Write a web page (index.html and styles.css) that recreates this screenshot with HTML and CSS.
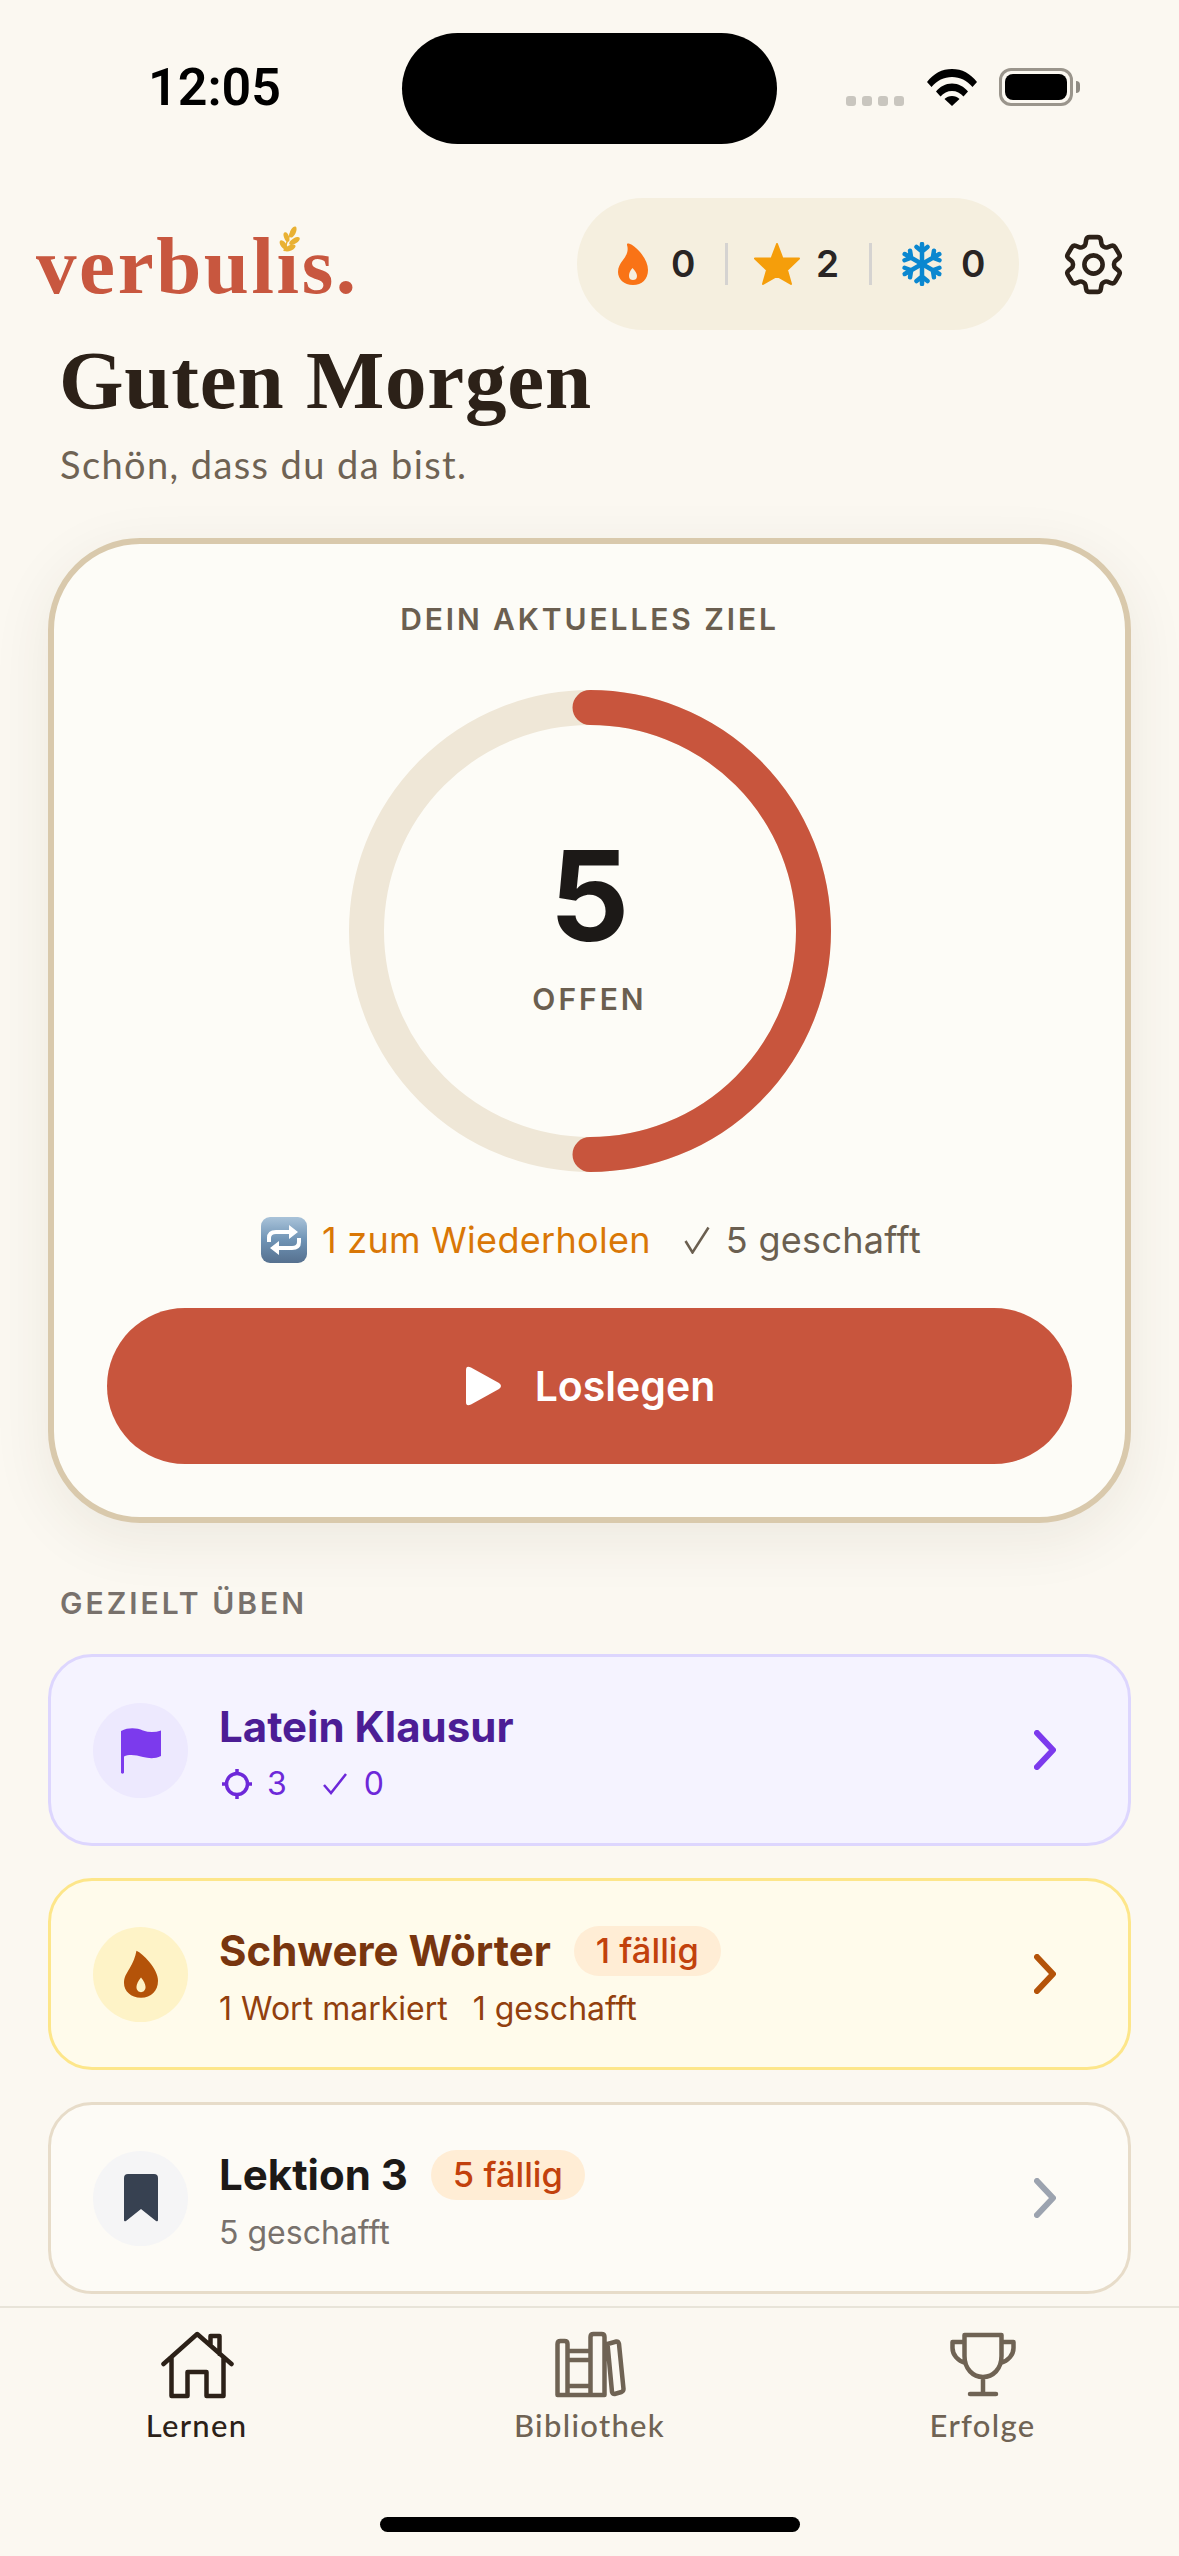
FILE: index.html
```html
<!DOCTYPE html>
<html lang="de">
<head>
<meta charset="utf-8">
<title>Verbulis</title>
<link rel="stylesheet" href="styles.css">
</head>
<body>
<div class="app">
  <div class="status">
    <div class="time">12:05</div>
    <div class="island"></div>
    <div class="sys">
      <div class="dots"><i></i><i></i><i></i><i></i></div>
      <svg class="wifi" width="50" height="37" viewBox="0 0 50 37"><path d="M0 13C6.500 4.500 15 0 25 0S43.500 4.500 50 13L45.500 18C40 11.500 33 8 25 8S10 11.500 4.500 18Z"/><path d="M9 22.500C13 17.500 18.500 14.500 25 14.500S37 17.500 41 22.500L36.500 27.500C33.500 24 29.500 22 25 22S16.500 24 13.500 27.500Z"/><path d="M17.500 30C19.500 28 22 27 25 27S30.500 28 32.500 30L25 37Z"/></svg>
      <div class="battery"><div class="battery-fill"></div></div>
      <div class="battery-cap"></div>
    </div>
  </div>

  <header class="head">
    <div class="logo">verbulis.<svg class="wheat" width="26" height="32" viewBox="0 0 26 32"><circle class="wheat-mask" cx="13" cy="17" r="11"/><path class="wheat-stem" d="M8 27C10 20 13 12 16 6"/><ellipse class="wheat-leaf" cx="17" cy="8" rx="2.800" ry="6" transform="rotate(25 17 8)"/><ellipse class="wheat-leaf" cx="10.500" cy="13" rx="2.500" ry="5" transform="rotate(-20 10.500 13)"/><ellipse class="wheat-leaf" cx="18.500" cy="17" rx="2.800" ry="6" transform="rotate(58 18.500 17)"/><ellipse class="wheat-leaf" cx="7.500" cy="21" rx="2.800" ry="5.500" transform="rotate(-35 7.500 21)"/><ellipse class="wheat-leaf" cx="14" cy="24" rx="2.800" ry="6" transform="rotate(65 14 24)"/></svg></div>
    <div class="head-right">
      <div class="pill">
        <svg class="p-flame" width="30" height="42" viewBox="0 0 30 42"><path fill-rule="evenodd" d="M10 .5C12 .5 17 3 22 9C27 15 30 21 30 27C30 36 24 42 15 42C6 42 0 36 0 29C0 24 2 21 5 17C8 13 11 8 9 2C9 1 9 .5 10 .5ZM14.500 25C12 28 11 30 11 33C11 36 13 37 15 37C17 37 19 36 19 33C19 30 17 28 14.500 25Z"/></svg>
        <span class="p-num n1">0</span>
        <span class="p-div d1"></span>
        <svg class="p-star" width="46" height="42" viewBox="0 0 46 42"><path d="M23 1L28.500 15.500H45L33 27L37 41L23 33L9 41L13 27L1 15.500H17.500Z"/></svg>
        <span class="p-num n2">2</span>
        <span class="p-div d2"></span>
        <svg class="p-snow" width="42" height="44" viewBox="-21 -22 42 44"><defs><g id="arm"><path d="M0 0V-20M-5.500 -17L0 -12.500L5.500 -17"/></g></defs><use href="#arm"/><use href="#arm" transform="rotate(60)"/><use href="#arm" transform="rotate(120)"/><use href="#arm" transform="rotate(180)"/><use href="#arm" transform="rotate(240)"/><use href="#arm" transform="rotate(300)"/></svg>
        <span class="p-num n3">0</span>
      </div>
      <svg class="gear" width="73" height="73" viewBox="0 0 24 24"><path d="M9.594 3.94c.09-.542.56-.94 1.11-.94h2.593c.55 0 1.02.398 1.11.94l.213 1.281c.063.374.313.686.645.87.074.04.147.083.22.127.325.196.72.257 1.075.124l1.217-.456a1.125 1.125 0 0 1 1.37.49l1.296 2.247a1.125 1.125 0 0 1-.26 1.431l-1.003.827c-.293.241-.438.613-.43.992a7.723 7.723 0 0 1 0 .255c-.008.378.137.75.43.991l1.004.827c.424.35.534.955.26 1.43l-1.298 2.247a1.125 1.125 0 0 1-1.369.491l-1.217-.456c-.355-.133-.75-.072-1.076.124a6.47 6.47 0 0 1-.22.128c-.331.183-.581.495-.644.869l-.213 1.281c-.09.543-.56.94-1.11.94h-2.594c-.55 0-1.019-.398-1.11-.94l-.213-1.281c-.062-.374-.312-.686-.644-.87a6.52 6.52 0 0 1-.22-.127c-.325-.196-.72-.257-1.076-.124l-1.217.456a1.125 1.125 0 0 1-1.369-.49l-1.297-2.247a1.125 1.125 0 0 1 .26-1.431l1.004-.827c.292-.24.437-.613.43-.991a6.932 6.932 0 0 1 0-.255c.007-.38-.138-.751-.43-.992l-1.004-.827a1.125 1.125 0 0 1-.26-1.43l1.297-2.247a1.125 1.125 0 0 1 1.37-.491l1.216.456c.356.133.751.072 1.076-.124.072-.044.146-.086.22-.128.332-.183.582-.495.644-.869l.214-1.28Z"/><circle cx="12" cy="12" r="3"/></svg>
    </div>
  </header>

  <main class="main">
    <h1 class="greet">Guten Morgen</h1>
    <p class="sub">Schön, dass du da bist.</p>

    <section class="card">
      <div class="card-label">DEIN AKTUELLES ZIEL</div>
      <div class="ring">
        <svg class="ring-svg" width="482" height="482" viewBox="0 0 482 482"><circle class="ring-track" cx="241" cy="241" r="223.500"/><path class="ring-prog" d="M241 17.500A223.500 223.500 0 0 1 241 464.500"/></svg>
        <div class="ring-center">
          <div class="ring-num">5</div>
          <div class="ring-cap">OFFEN</div>
        </div>
      </div>
      <div class="stats">
        <svg class="repeat" width="46" height="46" viewBox="0 0 46 46"><defs><linearGradient id="rep" x1="0" y1="0" x2="0" y2="1"><stop offset="0" stop-color="#a9c3d9"/><stop offset=".5" stop-color="#6f93b5"/><stop offset="1" stop-color="#56718f"/></linearGradient></defs><rect width="46" height="46" rx="9" fill="url(#rep)"/><path class="rep-line" d="M8 25V21Q8 15 15 15H29M38 21V25Q38 31 31 31H17"/><path class="rep-head" d="M28 8L37 15L28 22ZM18 24L9 31L18 38Z"/></svg>
        <span class="stat-due">1 zum Wiederholen</span>
        <span class="stat-done"><svg class="stat-check" width="26" height="28" viewBox="0 0 26 28"><path d="M1.500 15L8.500 26.500L24.500 1.500"/></svg>5 geschafft</span>
      </div>
      <button class="go"><svg class="play" width="36" height="40" viewBox="0 0 36 40"><path d="M0 4Q0 -1 5 1.500L33 17Q37 20 33 23L5 38.500Q0 41 0 36Z"/></svg>Loslegen</button>
    </section>

    <div class="section-label">GEZIELT ÜBEN</div>

    <div class="rows">
      <a class="row row-violet">
        <span class="row-icon"><svg width="40" height="47" viewBox="0 0 40 47"><path d="M0 4C8 0 16 1 22 3.500C28 5.500 34 5.500 40 3.500V29C34 32 28 31.500 22 30C15 28 8 27 3 29.500V45.500C3 47 0 47 0 45.500Z"/></svg></span>
        <span class="row-text">
          <span class="row-title">Latein Klausur</span>
          <span class="row-sub">
            <svg class="m-target" width="30" height="32" viewBox="0 0 30 32"><circle cx="15" cy="16" r="10.500"/><path d="M15 1V6M15 26V31M0 16H5M25 16H30"/></svg><span class="m-a">3</span>
            <svg class="m-check" width="24" height="22" viewBox="0 0 24 22"><path d="M1 12L8 20L23 1"/></svg><span>0</span>
          </span>
        </span>
        <svg class="chev" width="22" height="40" viewBox="0 0 22 40"><path d="M3 3L19 20L3 37"/></svg>
      </a>

      <a class="row row-amber">
        <span class="row-icon"><svg width="34" height="48" viewBox="0 0 30 42"><path fill-rule="evenodd" d="M11 .5C14 2 18 5 22 10C27 16 30 22 30 27C30 36 24 42 15 42C6 42 0 36 0 29C0 24 2 21 5 16C8 11 10 6 11 .5ZM15 24C12.500 27 11 30 11 32.500C11 35.500 13 37 15 37C17 37 19 35.500 19 32.500C19 30 17.500 27 15 24Z"/></svg></span>
        <span class="row-text">
          <span class="row-title">Schwere Wörter<span class="badge">1 fällig</span></span>
          <span class="row-sub"><span class="m-b">1 Wort markiert</span><span>1 geschafft</span></span>
        </span>
        <svg class="chev" width="22" height="40" viewBox="0 0 22 40"><path d="M3 3L19 20L3 37"/></svg>
      </a>

      <a class="row row-plain">
        <span class="row-icon"><svg width="34" height="48" viewBox="0 0 34 48"><path d="M4 0H30Q34 0 34 4V46Q34 48 32 47L17 35L2 47Q0 48 0 46V4Q0 0 4 0Z"/></svg></span>
        <span class="row-text">
          <span class="row-title">Lektion 3<span class="badge">5 fällig</span></span>
          <span class="row-sub">5 geschafft</span>
        </span>
        <svg class="chev" width="22" height="40" viewBox="0 0 22 40"><path d="M3 3L19 20L3 37"/></svg>
      </a>
    </div>
  </main>

  <nav class="nav">
    <div class="tabs">
      <div class="tab active">
        <svg width="74" height="72" viewBox="19.500 8 74 72"><path d="M23 44L56.700 14L91 44M31 37V76H47V52H66V76H83V37M70 25V16H79V34"/></svg>
        <span>Lernen</span>
      </div>
      <div class="tab">
        <svg width="80" height="72" viewBox="9.500 8 80 72"><path d="M20 21H24Q27 21 27 24V75H17V24Q17 21 20 21ZM27 31H50M27 40H50M27 66H50M27 75H50M53 14H61Q64 14 64 17V75H50V17Q50 14 53 14ZM67 24L76 21.500Q78 21.500 78.500 24L83 69Q83 71 81 72L74 74Q72 74 71.500 72L67 24Z"/></svg>
        <span>Bibliothek</span>
      </div>
      <div class="tab">
        <svg width="72" height="72" viewBox="0 0 72 72"><path d="M17.500 7H54.500V28C54.500 41 46 49 36 49C26 49 17.500 41 17.500 28ZM17.500 14H5.500V20C5.500 27 11 33 18.500 35M54.500 14H66.500V20C66.500 27 61 33 53.500 35M36 49V66M23 66H49"/></svg>
        <span>Erfolge</span>
      </div>
    </div>
    <div class="homebar"></div>
  </nav>
</div>
</body>
</html>
```

FILE: styles.css
```css
* { box-sizing: border-box; }
html, body { margin: 0; padding: 0; }
body { background: #fbf8f1; font-family: "Inter", "Liberation Sans", sans-serif; }

.app {
  width: 1179px;
  height: 2556px;
  display: flex;
  flex-direction: column;
  overflow: hidden;
  background: #fbf8f1;
}

/* Status bar */
.status {
  height: 198px;
  flex: none;
  display: flex;
  align-items: flex-start;
  padding-left: 148px;
}
.time {
  width: 132px;
  margin-top: 58px;
  font: 600 52px/60px "Roboto", "Liberation Sans", sans-serif;
  color: #000;
  white-space: nowrap;
}
.island {
  width: 375px;
  height: 111px;
  margin: 33px 0 0 122px;
  background: #000;
  border-radius: 56px;
}
.sys {
  display: flex;
  align-items: flex-start;
  margin: 68px 0 0 69px;
}
.dots {
  display: flex;
  gap: 6px;
  margin-top: 28px;
}
.dots i {
  width: 10px;
  height: 10px;
  border-radius: 3px;
  background: #c9c6bf;
}
.wifi { margin: 1px 0 0 23px; fill: #000; }
.battery {
  width: 74px;
  height: 38px;
  margin-left: 22px;
  padding: 3px;
  border: 3px solid #9a958c;
  border-radius: 12px;
}
.battery-fill {
  width: 100%;
  height: 100%;
  background: #000;
  border-radius: 8px;
}
.battery-cap {
  width: 4px;
  height: 12px;
  margin: 13px 0 0 3px;
  background: #8f8b83;
  border-radius: 0 6px 6px 0;
}

/* Header */
.head {
  height: 132px;
  flex: none;
  display: flex;
  align-items: center;
  justify-content: space-between;
  padding: 0 49px 0 36px;
}
.logo {
  position: relative;
  font: 700 81px/90px "Liberation Serif", serif;
  letter-spacing: 2.6px;
  color: #c8573f;
  margin-top: 4px;
}
.wheat { position: absolute; left: 240px; top: 3px; }
.wheat-mask { fill: #fbf8f1; }
.wheat-leaf { fill: #e9b133; }
.wheat-stem { fill: none; stroke: #e9b133; stroke-width: 1.5; }
.head-right { display: flex; align-items: center; gap: 38px; }
.pill {
  width: 442px;
  height: 132px;
  padding: 0 0 0 41px;
  display: flex;
  align-items: center;
  background: #f5efdf;
  border-radius: 66px;
}
.p-flame { fill: #f97316; }
.p-star { fill: #f59e0b; stroke: #f59e0b; stroke-width: 2; stroke-linejoin: round; margin-left: 26px; }
.p-snow { fill: none; stroke: #0a87d0; stroke-width: 4.5; stroke-linecap: round; stroke-linejoin: round; margin-left: 29px; }
.p-num {
  width: 22px;
  font-size: 37px;
  line-height: 42px;
  font-weight: 600;
  color: #292524;
  text-align: center;
}
.n1 { margin-left: 23px; }
.n2 { margin-left: 16px; }
.n3 { margin-left: 18px; }
.p-div { width: 3px; height: 42px; background: #d5d3d1; }
.d1 { margin-left: 32px; }
.d2 { margin-left: 31px; }
.gear { fill: none; stroke: #2c2118; stroke-width: 1.5; stroke-linejoin: round; }

/* Main */
.main { flex: 1; min-height: 0; overflow: hidden; }
.greet {
  margin: 2px 0 0;
  padding-left: 59px;
  font: 700 83px/96px "Liberation Serif", serif;
  letter-spacing: 0.8px;
  color: #2c2118;
}
.sub {
  margin: 12px 0 0;
  padding-left: 60px;
  font: 400 38px/48px "Lato", sans-serif;
  letter-spacing: 1.4px;
  color: #6f6354;
}
.card {
  margin: 50px 48px 0;
  height: 985px;
  padding: 57px 53px 53px;
  background: #fdfcf7;
  border: 6px solid #d9c9ac;
  border-radius: 92px;
  box-shadow: 0 16px 60px rgba(70, 50, 20, 0.08);
}
.card-label {
  font-size: 30px;
  line-height: 36px;
  font-weight: 600;
  letter-spacing: 2.9px;
  color: #6b5f50;
  text-align: center;
}
.ring {
  width: 482px;
  height: 482px;
  margin: 53px auto 0;
  display: grid;
  place-items: center;
}
.ring-svg, .ring-center { grid-area: 1 / 1; }
.ring-track { fill: none; stroke: #efe7d7; stroke-width: 35; }
.ring-prog { fill: none; stroke: #c8553d; stroke-width: 35; stroke-linecap: round; }
.ring-center { text-align: center; padding-bottom: 14px; }
.ring-num {
  font-size: 125px;
  line-height: 130px;
  font-weight: 700;
  color: #1c1917;
}
.ring-cap {
  margin-top: 20px;
  font-size: 30px;
  line-height: 36px;
  font-weight: 600;
  letter-spacing: 3px;
  color: #6b5f50;
}
.stats {
  margin-top: 45px;
  height: 46px;
  padding-left: 3px;
  display: flex;
  align-items: center;
  justify-content: center;
  font-size: 36px;
  line-height: 46px;
  letter-spacing: 0.3px;
  white-space: nowrap;
}
.rep-line { fill: none; stroke: #fff; stroke-width: 4; }
.rep-head { fill: #fff; }
.stat-due { margin-left: 15px; color: #d97706; }
.stat-done { margin-left: 33px; color: #6b5f50; display: flex; align-items: center; }
.stat-check { fill: none; stroke: #6b5f50; stroke-width: 2.5; margin-right: 16px; }
.go {
  display: flex;
  align-items: center;
  justify-content: center;
  gap: 33px;
  width: 100%;
  height: 156px;
  margin-top: 45px;
  padding-left: 8px;
  border: 0;
  border-radius: 78px;
  background: #c8553d;
  color: #fff;
  font: 600 41px/48px "Inter", sans-serif;
}
.play { fill: #fff; }
.section-label {
  margin: 62px 0 33px;
  padding-left: 60px;
  font-size: 30px;
  line-height: 36px;
  font-weight: 600;
  letter-spacing: 3px;
  color: #78716c;
}
.rows { display: flex; flex-direction: column; gap: 32px; margin: 0 48px; }
.row {
  height: 192px;
  display: flex;
  align-items: center;
  padding: 0 72px 0 42px;
  border: 3px solid;
  border-radius: 44px;
}
.row-icon {
  width: 95px;
  height: 95px;
  flex: none;
  display: flex;
  align-items: center;
  justify-content: center;
  border-radius: 50%;
}
.row-text { display: flex; flex-direction: column; margin-left: 31px; padding-top: 6px; }
.row-title {
  display: flex;
  align-items: center;
  font-size: 42px;
  line-height: 48px;
  font-weight: 700;
  white-space: nowrap;
}
.badge {
  margin-left: 23px;
  padding: 0 22px;
  height: 50px;
  border-radius: 25px;
  background: #ffedd5;
  color: #c2410c;
  font-size: 34.5px;
  line-height: 50px;
  font-weight: 500;
}
.row-sub {
  display: flex;
  align-items: center;
  margin-top: 13px;
  font-size: 32px;
  line-height: 40px;
  white-space: nowrap;
}
.m-target { fill: none; stroke: #6d28d9; stroke-width: 3.5; margin: 0 15px 0 3px; }
.m-check { fill: none; stroke: #6d28d9; stroke-width: 2.5; margin-right: 17px; }
.m-a { margin-right: 36px; }
.m-b { margin-right: 25px; }
.chev { margin-left: auto; fill: none; stroke-width: 6; stroke-linecap: round; stroke-linejoin: round; }
.row-violet { background: #f5f3ff; border-color: #ddd6fe; }
.row-violet .row-icon { background: #ede9fe; fill: #7c3aed; }
.row-violet .row-title { color: #4c1d95; }
.row-violet .row-sub { color: #6d28d9; }
.row-violet .chev { stroke: #7c3aed; }
.row-amber { background: #fffbeb; border-color: #fde68a; }
.row-amber .row-icon { background: #fef3c7; fill: #b45309; }
.row-amber .row-title { color: #78350f; }
.row-amber .row-sub { color: #92400e; }
.row-amber .chev { stroke: #b45309; }
.row-plain { background: #fdfbf6; border-color: #e7dcc9; }
.row-plain .row-icon { background: #f5f5f6; fill: #374151; }
.row-plain .row-title { color: #1c1917; }
.row-plain .row-sub { color: #78716c; }
.row-plain .chev { stroke: #9ca3af; }

/* Tab bar */
.nav {
  flex: none;
  height: 250px;
  padding-top: 20px;
  border-top: 2px solid #e8e4d9;
  background: #fbf8f1;
}
.tabs { display: grid; grid-template-columns: repeat(3, 393px); }
.tab {
  display: flex;
  flex-direction: column;
  align-items: center;
  color: #6f6354;
  font: 500 31px/36px "Lato", sans-serif;
}
.tab svg { fill: none; stroke: #6f6354; stroke-width: 4.5; stroke-linecap: round; stroke-linejoin: round; }
.tab span { margin-top: 7px; letter-spacing: 1.3px; }
.tab.active { color: #2c2118; }
.tab.active svg { stroke: #2c2118; }
.homebar {
  width: 420px;
  height: 15px;
  margin: 74px auto 0;
  background: #000;
  border-radius: 8px;
}
```
